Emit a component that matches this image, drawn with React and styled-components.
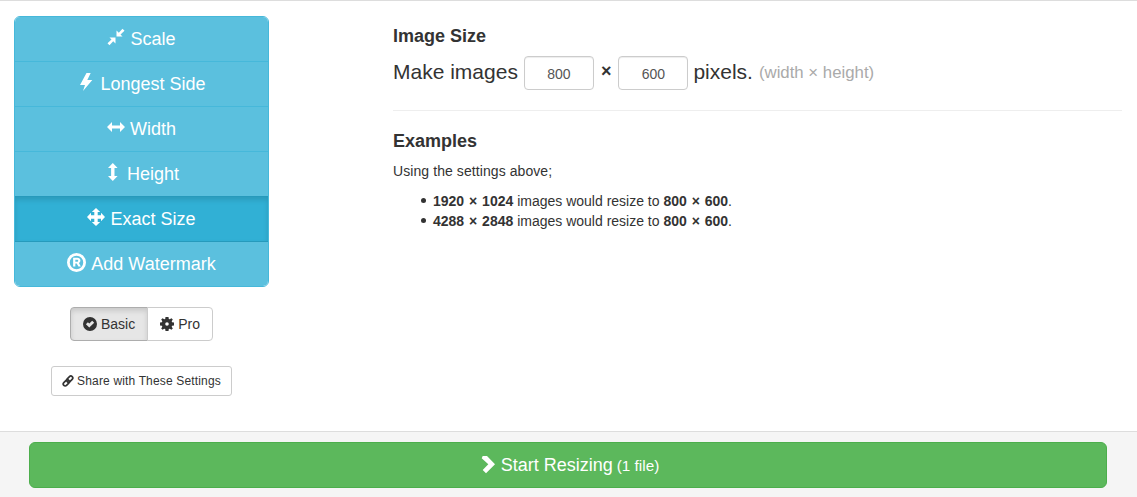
import React from "react";
import styled, { createGlobalStyle } from "styled-components";

const Global = createGlobalStyle`
  html, body { margin: 0; padding: 0; background: #fff; }
  body { font-family: "Liberation Sans", Arial, sans-serif; font-size: 14px; line-height: 20px; color: #333; }
  * { box-sizing: border-box; }
`;

const Page = styled.div`
  height: 497px;
  display: flex;
  flex-direction: column;
  border-top: 1px solid #ddd;
  overflow: hidden;
`;
const Main = styled.main`
  flex: 1;
  display: flex;
  padding: 15px 15px 0 14px;
`;
const Side = styled.aside`
  width: 255px;
  flex: none;
  display: flex;
  flex-direction: column;
  align-items: center;
`;
const Menu = styled.nav`
  width: 100%;
  display: flex;
  flex-direction: column;
  border-radius: 6px;
  overflow: hidden;
  border: 1px solid #46b8da;
`;
const MenuItem = styled.div`
  height: 45px;
  display: flex;
  align-items: center;
  justify-content: center;
  gap: ${p => p.$gap ?? 5}px;
  color: #fff;
  font-size: 18px;
  line-height: 24px;
  border-top: 1px solid ${p => (p.$active || p.$afterActive ? "#269abc" : "#46b8da")};
  background: ${p => (p.$active ? "#31b0d5" : "#5bc0de")};
  box-shadow: ${p => (p.$active ? "inset 0 3px 5px rgba(0,0,0,.125)" : "none")};
  &:first-child { border-top: 0; height: 44px; }
`;
const Toggle = styled.div`
  display: flex;
  margin-top: 20px;
  height: 34px;
`;
const ToggleBtn = styled.div`
  display: flex;
  align-items: center;
  gap: 4px;
  height: 34px;
  padding: 0 12px;
  font-size: 14px;
  color: #333;
  border: 1px solid ${p => (p.$active ? "#adadad" : "#ccc")};
  background: ${p => (p.$active ? "#e6e6e6" : "#fff")};
  box-shadow: ${p => (p.$active ? "inset 0 3px 5px rgba(0,0,0,.125)" : "none")};
  border-radius: ${p => (p.$active ? "4px 0 0 4px" : "0 4px 4px 0")};
  margin-left: ${p => (p.$active ? 0 : -1)}px;
`;
const ShareBtn = styled.div`
  margin-top: 25px;
  height: 30px;
  display: flex;
  align-items: center;
  gap: 3px;
  padding: 0 10px;
  font-size: 12px;
  letter-spacing: .16px;
  color: #333;
  border: 1px solid #ccc;
  border-radius: 3px;
  background: #fff;
`;
const Content = styled.section`
  flex: 1;
  margin-left: 124px;
  display: flex;
  flex-direction: column;
`;
const Heading = styled.h4`
  margin: 10px 0 0;
  font-size: 18px;
  line-height: 20px;
  font-weight: 700;
  color: #333;
`;
const SizeRow = styled.div`
  display: flex;
  align-items: flex-start;
  margin-top: 10px;
  height: 34px;
  font-size: 21px;
  line-height: 31px;
  color: #333;
`;
const SizeInput = styled.div`
  width: 70px;
  height: 34px;
  display: flex;
  align-items: center;
  justify-content: center;
  padding-top: 1px;
  margin: 0 ${p => p.$right ?? 6}px 0 6px;
  font-size: 14px;
  line-height: 20px;
  color: #555;
  border: 1px solid #ccc;
  border-radius: 4px;
  background: #fff;
  box-shadow: inset 0 1px 1px rgba(0,0,0,.075);
`;
const Times = styled.span`
  font-size: 18px;
  font-weight: 700;
  margin: 0 1px;
`;
const Hint = styled.span`
  font-size: 16.8px;
  line-height: 33px;
  color: #aaa;
  margin-left: 6px;
`;
const Rule = styled.hr`
  width: 100%;
  margin: 20px 0 10px;
  border: 0;
  border-top: 1px solid #eee;
`;
const Para = styled.p`
  margin: 10px 0 10px;
  letter-spacing: .08px;
`;
const List = styled.ul`
  margin: 0;
  padding-left: 40px;
  list-style: none;
`;
const Item = styled.li`
  position: relative;
  line-height: 20px;
  &::before {
    content: "";
    position: absolute;
    left: -12px;
    top: 7px;
    width: 5px;
    height: 5px;
    border-radius: 50%;
    background: #333;
  }
`;
const Strong = styled.b`
  word-spacing: 1px;
`;
const Footer = styled.footer`
  flex: none;
  height: 66px;
  background: #f5f5f5;
  border-top: 1px solid #ddd;
  padding: 10px 30px 0 29px;
`;
const StartBtn = styled.div`
  height: 46px;
  display: flex;
  align-items: center;
  justify-content: center;
  gap: 6px;
  font-size: 18px;
  color: #fff;
  background: #5cb85c;
  border: 1px solid #4cae4c;
  border-radius: 6px;
`;
const Small = styled.small`
  font-size: 15.3px;
  margin-left: -1px;
`;
const Icon = styled.svg`
  width: ${p => p.$s ?? 18}px;
  height: ${p => p.$s ?? 18}px;
  flex: none;
  fill: currentColor;
  position: relative;
  top: ${p => p.$top ?? -2}px;
`;

const paths = {
  scale: "M9.5 8.5 V2.5 L11.8 4.8 L15.5 .8 L17.5 2.8 L13.5 6.6 L15.5 8.5 Z M8.5 9.5 V15.5 L6.2 13.2 L2.5 17.2 L.5 15.2 L4.5 11.4 L2.5 9.5 Z",
  bolt: "M9.5 0 L3 12 H8 L6 18 L15.3 7 H10.3 L13.7 0 Z",
  width: "M0 9 L5 4 V7.5 H13 V4 L18 9 L13 14 V10.5 H5 V14 Z",
  height: "M8.8 0 L13.6 5 H10.5 V13 H13.6 L8.8 18 L4 13 H7.1 V5 H4 Z",
  move: "M9 0 L13.2 4 H10.7 V7.3 H14 V4.8 L18 9 L14 13.2 V10.7 H10.7 V14 H13.2 L9 18 L4.8 14 H7.3 V10.7 H4 V13.2 L0 9 L4 4.8 V7.3 H7.3 V4 H4.8 Z",
  next: "M4.7 2.3 L5.7 0 H10 L18 8.3 L9 17.3 L5.7 14 L11.3 8.3 Z",
};

const P = ({ name, ...r }) => (
  <Icon viewBox="0 0 18 18" {...r}><path d={paths[name]} /></Icon>
);

const Registered = () => (
  <Icon viewBox="0 0 18 18" $s={19}>
    <path fillRule="evenodd" d="M9 0a9 9 0 1 0 0 18A9 9 0 0 0 9 0zm0 2.6a6.4 6.4 0 1 1 0 12.8A6.4 6.4 0 0 1 9 2.6zM5.8 4.6h4c1.7 0 2.9 1 2.9 2.6 0 1-.5 1.8-1.4 2.2l1.8 3.4h-2.3L9.2 10H7.9v2.8H5.8zm2.1 1.7v2h1.6c.7 0 1.1-.4 1.1-1s-.4-1-1.1-1z" />
  </Icon>
);

const Check = () => (
  <Icon viewBox="0 0 14 14" $s={14} $top={0}>
    <path fillRule="evenodd" d="M7 0a7 7 0 1 0 0 14A7 7 0 0 0 7 0zM2.9 7.2l2-2 1.4 1.4 2.9-2.9 2 2-4.9 4.9z" />
  </Icon>
);

const Cog = () => (
  <Icon viewBox="0 0 14 14" $s={14} $top={0}>
    <path fillRule="evenodd" d="M5.5 0h3l.3 1.9 1 .4L11.4 1.2l1.4 1.4-1.1 1.6.4 1 1.9.3v3l-1.9.3-.4 1 1.1 1.6-1.4 1.4-1.6-1.1-1 .4-.3 1.9h-3l-.3-1.9-1-.4-1.6 1.1-1.4-1.4 1.1-1.6-.4-1L0 8.5v-3l1.9-.3.4-1-1.1-1.6 1.4-1.4 1.6 1.1 1-.4zM7 5.2a1.8 1.8 0 1 0 0 3.6 1.8 1.8 0 0 0 0-3.6z" />
  </Icon>
);

const LinkIcon = () => (
  <Icon viewBox="0 0 12 12" $s={12} $top={0}>
    <g fill="none" stroke="currentColor" strokeWidth="1.7">
      <rect x="4.2" y="2.2" width="7" height="3.8" rx="1.9" transform="rotate(-45 7.7 4.1)" />
      <rect x=".8" y="6" width="7" height="3.8" rx="1.9" transform="rotate(-45 4.3 7.9)" />
    </g>
  </Icon>
);

const items = [
  { label: "Scale", icon: <P name="scale" /> },
  { label: "Longest Side", icon: <P name="bolt" /> },
  { label: "Width", icon: <P name="width" /> },
  { label: "Height", icon: <P name="height" /> },
  { label: "Exact Size", icon: <P name="move" />, active: true },
  { label: "Add Watermark", icon: <Registered />, afterActive: true, gap: 5 },
];

export default function App() {
  return (
    <>
      <Global />
      <Page>
        <Main>
          <Side>
            <Menu>
              {items.map(i => (
                <MenuItem key={i.label} $active={i.active} $afterActive={i.afterActive} $gap={i.gap}>
                  {i.icon}<span>{i.label}</span>
                </MenuItem>
              ))}
            </Menu>
            <Toggle>
              <ToggleBtn $active><Check />Basic</ToggleBtn>
              <ToggleBtn><Cog />Pro</ToggleBtn>
            </Toggle>
            <ShareBtn><LinkIcon />Share with These Settings</ShareBtn>
          </Side>
          <Content>
            <Heading>Image Size</Heading>
            <SizeRow>
              Make images
              <SizeInput>800</SizeInput>
              <Times>×</Times>
              <SizeInput $right={5}>600</SizeInput>
              pixels.
              <Hint>(width × height)</Hint>
            </SizeRow>
            <Rule />
            <Heading>Examples</Heading>
            <Para>Using the settings above;</Para>
            <List>
              <Item><Strong>1920 × 1024</Strong> images would resize to <Strong>800 × 600</Strong>.</Item>
              <Item><Strong>4288 × 2848</Strong> images would resize to <Strong>800 × 600</Strong>.</Item>
            </List>
          </Content>
        </Main>
        <Footer>
          <StartBtn>
            <P name="next" $top={0} />
            <span>Start Resizing <Small>(1 file)</Small></span>
          </StartBtn>
        </Footer>
      </Page>
    </>
  );
}
